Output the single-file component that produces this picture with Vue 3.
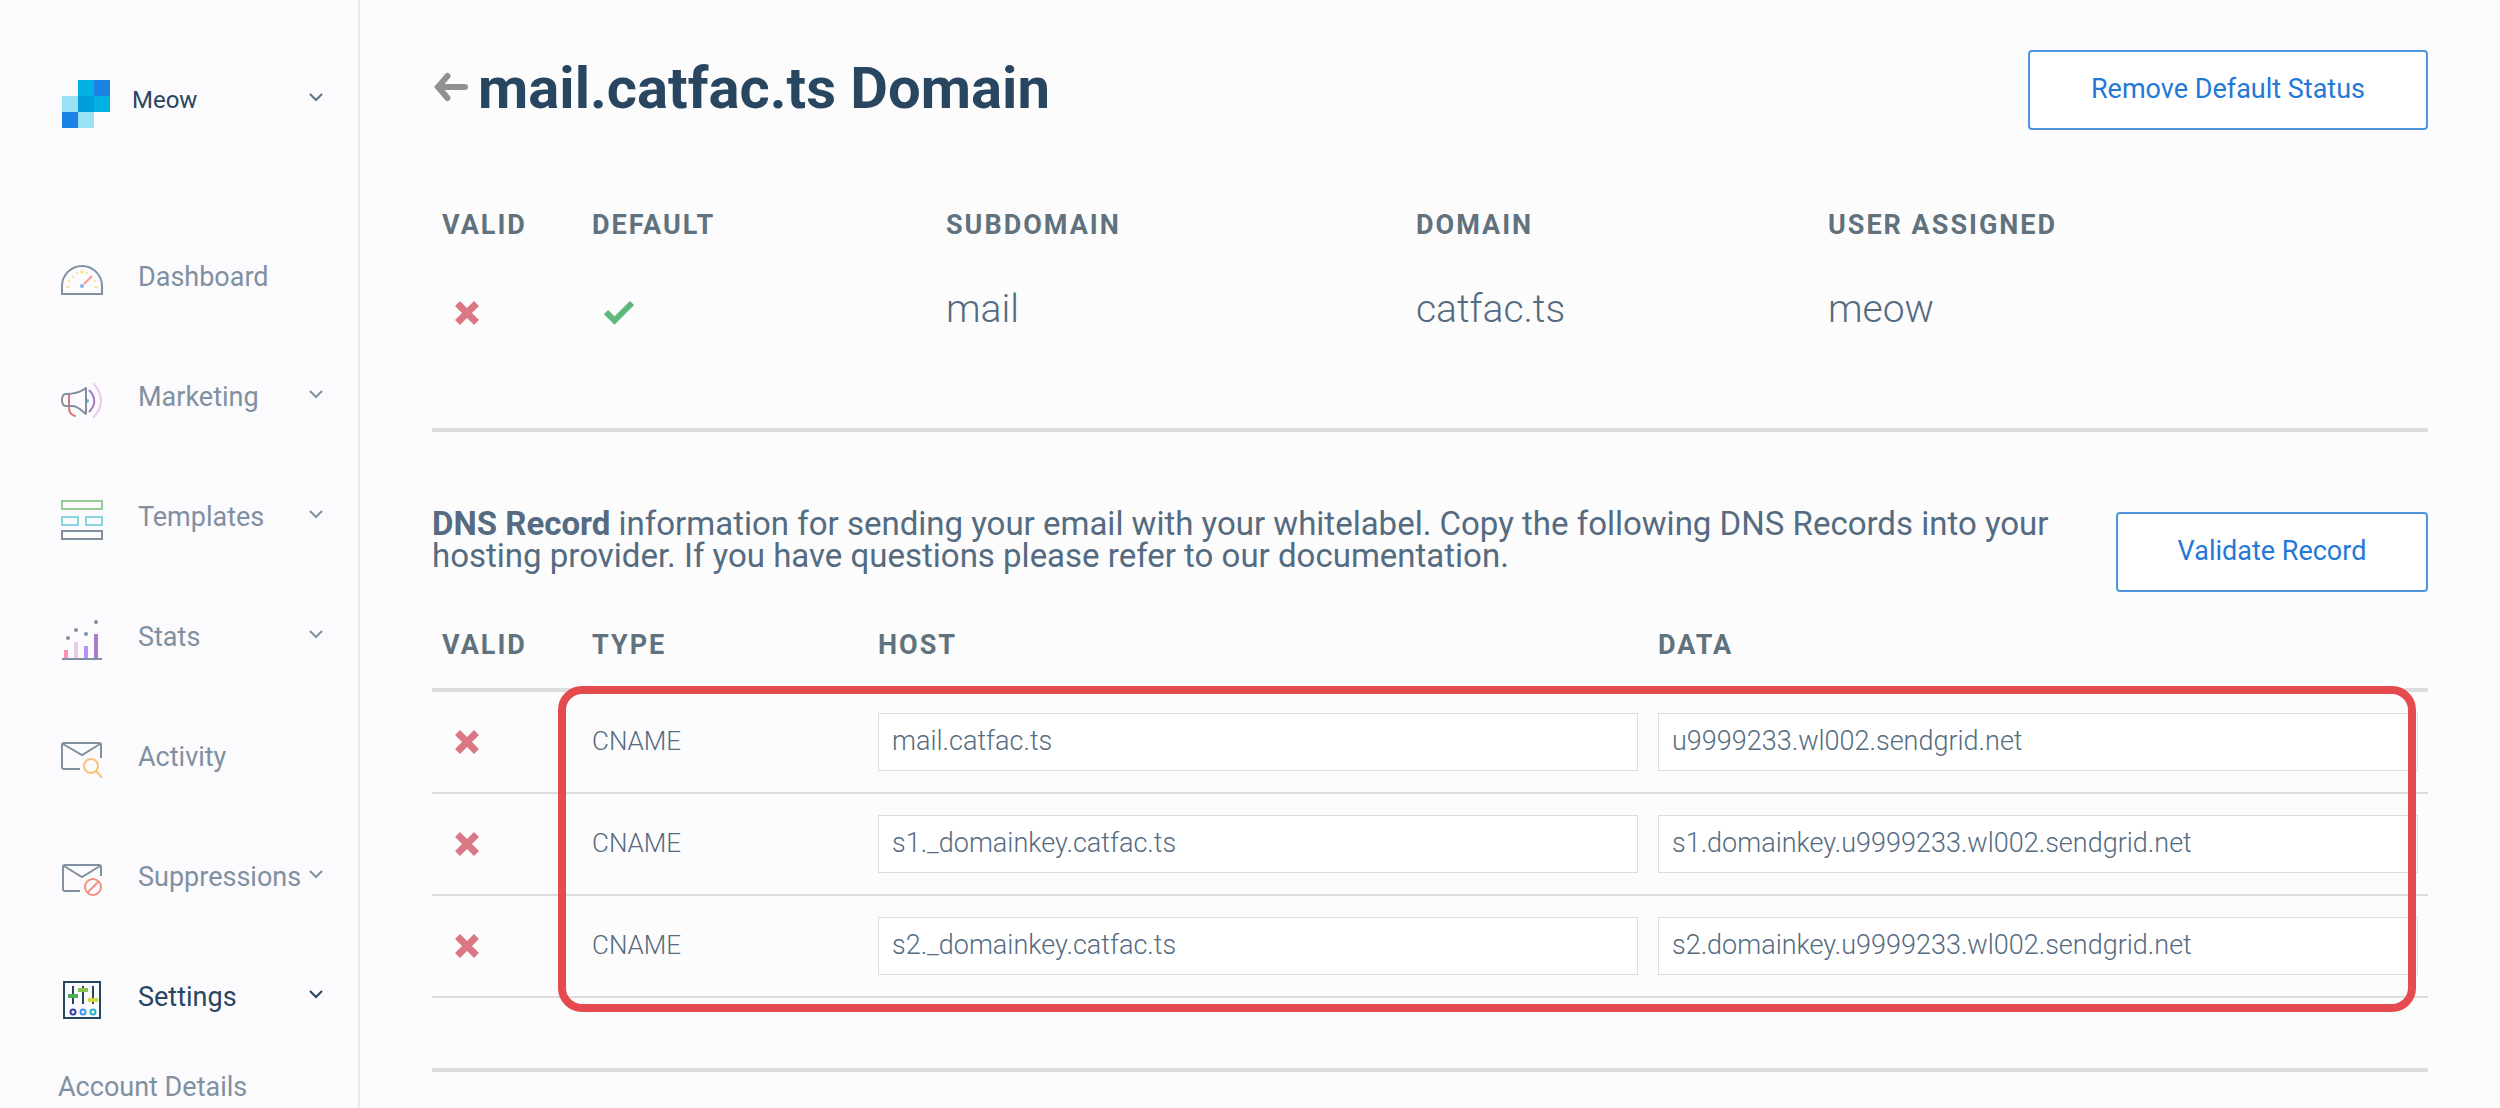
<script setup>
import { ref } from 'vue'

const navItems = [
  { id: 'dashboard', label: 'Dashboard', expandable: false },
  { id: 'marketing', label: 'Marketing', expandable: true },
  { id: 'templates', label: 'Templates', expandable: true },
  { id: 'stats', label: 'Stats', expandable: true },
  { id: 'activity', label: 'Activity', expandable: false },
  { id: 'suppressions', label: 'Suppressions', expandable: true },
  { id: 'settings', label: 'Settings', expandable: true, active: true }
]

const records = ref([
  { type: 'CNAME', host: 'mail.catfac.ts', data: 'u9999233.wl002.sendgrid.net' },
  { type: 'CNAME', host: 's1._domainkey.catfac.ts', data: 's1.domainkey.u9999233.wl002.sendgrid.net' },
  { type: 'CNAME', host: 's2._domainkey.catfac.ts', data: 's2.domainkey.u9999233.wl002.sendgrid.net' }
])
</script>

<template>
  <div class="app">
    <aside class="sidebar">
      <a class="brand" href="#">
        <svg class="logo" viewBox="0 0 48 48" aria-hidden="true" shape-rendering="crispEdges">
          <path fill="#00b2e3" d="M16 0h16v16H16zM32 16h16v16H32z" />
          <path fill="#1a82e2" d="M32 0h16v16H32zM0 32h16v16H0z" />
          <path fill="#99e1f4" d="M0 16h16v16H0zM16 32h16v16H16z" />
          <path fill="#009dd9" d="M16 16h16v16H16z" />
        </svg>
        <span class="brand-name">Meow</span>
        <svg class="chevron" viewBox="0 0 24 24" aria-hidden="true"><path d="M6 6l6 6 6-6" /></svg>
      </a>

      <nav class="nav" aria-label="Main">
        <a v-for="item in navItems" :key="item.id" class="nav-item" :class="{ active: item.active }" href="#">
          <svg class="nav-icon" viewBox="0 0 48 48" aria-hidden="true">
            <template v-if="item.id === 'dashboard'">
              <path d="M4 41V33a20 20 0 0 1 40 0V41z" />
              <g fill="#fbe3a0" stroke="none">
                <rect x="8" y="33" width="4" height="2" rx="1" />
                <rect x="36" y="33" width="4" height="2" rx="1" />
                <circle cx="11" cy="28" r="1.200" />
                <circle cx="15" cy="24" r="1.200" />
                <circle cx="19" cy="20" r="1.200" />
                <circle cx="24" cy="19" r="2" />
                <circle cx="29" cy="20" r="1.200" />
                <circle cx="37" cy="28" r="1.200" />
              </g>
              <path stroke="#f69b89" d="M26 31l8-8" />
              <circle cx="24" cy="33" r="2" fill="#7db1ec" stroke="none" />
            </template>
            <template v-else-if="item.id === 'marketing'">
              <path stroke="#d9776f" stroke-linecap="round" d="M11 21V35Q11 41 17 43" />
              <path stroke-linejoin="round" d="M28 15C23 19 18 21 8 21Q4 21 4 27Q4 33 8 33H14C20 33 24 38 28 41Z" />
              <path fill="#64b5f6" stroke="none" d="M29 26a2 2 0 0 1 0 4z" />
              <path stroke="#a878c4" stroke-linecap="round" d="M31.500 17.500Q41 28 31.500 38.500" />
              <path stroke="#e8cbec" stroke-linecap="round" d="M36 11Q50 27.500 36 44" />
            </template>
            <template v-else-if="item.id === 'templates'">
              <path stroke="#98cc96" d="M4 8h40v8H4z" />
              <path stroke="#8bd5e0" d="M4 24h16v8H4zM28 24h16v8H28z" />
              <path d="M4 38h40v8H4z" />
            </template>
            <template v-else-if="item.id === 'stats'">
              <g stroke="none">
                <path fill="#fa8fb1" d="M6 37h4v8H6z" />
                <path fill="#e8cbec" d="M16 29h4v16h-4z" />
                <path fill="#b094fb" d="M26 33h4v12h-4z" />
                <path fill="#ab7bc8" d="M36 21h4v24h-4z" />
                <g fill="currentColor">
                  <circle cx="10" cy="25" r="2" /><circle cx="18" cy="17" r="2" />
                  <circle cx="28" cy="21" r="2" /><circle cx="38" cy="9" r="2" />
                </g>
              </g>
              <path d="M4 46h40" />
            </template>
            <template v-else-if="item.id === 'activity'">
              <path d="M22 36H6q-2 0-2-2V12q0-2 2-2H41q2 0 2 2V25" />
              <path d="M5 11l19 11 18-11" />
              <circle cx="33" cy="33" r="7" stroke="#fbc078" />
              <path stroke="#fbc078" stroke-linecap="round" d="M38 38l5.500 6" />
            </template>
            <template v-else-if="item.id === 'suppressions'">
              <path d="M22 38H7q-2 0-2-2V14q0-2 2-2H41q2 0 2 2V23" />
              <path d="M6 13l18 11 18-11" />
              <circle cx="35" cy="34" r="8" stroke="#f0917f" />
              <path stroke="#f0917f" d="M29.500 39.500l11-11" />
            </template>
            <template v-else>
              <path d="M6 9h36v36H6zM15 13v18M25 13v18M35 13v18" />
              <g stroke="none">
                <path fill="#4caf50" d="M10 21h10v4H10z" />
                <path fill="#8bc34a" d="M20 15h10v4H20z" />
                <path fill="#cddc39" d="M30 25h10v4H30z" />
              </g>
              <circle cx="15" cy="39" r="2.500" stroke="#3843a5" />
              <circle cx="25" cy="39" r="2.500" stroke="#3f97ee" />
              <circle cx="35" cy="39" r="2.500" stroke="#26b5c8" />
            </template>
          </svg>
          <span>{{ item.label }}</span>
          <svg v-if="item.expandable" class="chevron" viewBox="0 0 24 24" aria-hidden="true"><path d="M6 6l6 6 6-6" /></svg>
        </a>
        <a class="sub-item" href="#">Account Details</a>
      </nav>
    </aside>

    <main class="content">
      <header class="page-header">
        <h1 class="title">
          <a class="back" href="#" aria-label="Back">
            <svg viewBox="0 0 36 32" aria-hidden="true"><path d="M15.500 4L6 15l9.500 11M6 15h27" /></svg>
          </a>
          mail.catfac.ts Domain
        </h1>
        <button class="btn btn-wide" type="button">Remove Default Status</button>
      </header>

      <table class="summary">
        <colgroup>
          <col class="col-valid"><col class="col-default"><col class="col-subdomain"><col class="col-domain"><col>
        </colgroup>
        <thead>
          <tr>
            <th scope="col">Valid</th>
            <th scope="col">Default</th>
            <th scope="col">Subdomain</th>
            <th scope="col">Domain</th>
            <th scope="col">User Assigned</th>
          </tr>
        </thead>
        <tbody>
          <tr>
            <td class="status">
              <svg class="cross" viewBox="0 0 26 26" role="img" aria-label="Not valid"><path d="M3.500 3.500l19 19M22.500 3.500l-19 19" /></svg>
            </td>
            <td class="status">
              <svg class="check" viewBox="0 0 32 26" role="img" aria-label="Default"><path d="M2 12l8.500 8.500L28 3" /></svg>
            </td>
            <td>mail</td>
            <td>catfac.ts</td>
            <td>meow</td>
          </tr>
        </tbody>
      </table>

      <hr class="rule">

      <section class="dns-intro">
        <p><strong>DNS Record</strong> information for sending your email with your whitelabel. Copy the following DNS Records into your hosting provider. If you have questions please refer to our documentation.</p>
        <button class="btn" type="button">Validate Record</button>
      </section>

      <div class="records-wrap">
        <table class="records">
          <colgroup>
            <col class="col-valid"><col class="col-type"><col><col>
          </colgroup>
          <thead>
            <tr>
              <th scope="col">Valid</th>
              <th scope="col">Type</th>
              <th scope="col">Host</th>
              <th scope="col">Data</th>
            </tr>
          </thead>
          <tbody>
            <tr v-for="record in records" :key="record.host">
              <td>
                <svg class="cross" viewBox="0 0 26 26" role="img" aria-label="Not valid"><path d="M3.500 3.500l19 19M22.500 3.500l-19 19" /></svg>
              </td>
              <td class="type">{{ record.type }}</td>
              <td><input v-model="record.host" type="text" readonly aria-label="Host"></td>
              <td><input v-model="record.data" type="text" readonly aria-label="Data"></td>
            </tr>
          </tbody>
        </table>
        <div class="highlight"></div>
      </div>

      <hr class="rule rule-end">
    </main>
  </div>
</template>

<style>
body {
  margin: 0;
  background: #fcfcfc;
}
</style>

<style scoped>
.app {
  display: flex;
  min-height: 100vh;
  font-family: Roboto, "Liberation Sans", sans-serif;
  font-size: 27px;
  color: #546b81;
}

.app * {
  box-sizing: border-box;
}

a {
  color: inherit;
  text-decoration: none;
}

/* Sidebar */
.sidebar {
  flex: 0 0 360px;
  padding: 80px 30px 0 58px;
  border-right: 2px solid #e9eaee;
  background: #fbfbfe;
  color: #8190a0;
}

.brand {
  display: flex;
  align-items: flex-start;
  margin-bottom: 89px;
  padding-left: 4px;
  color: #294661;
}

.logo {
  width: 48px;
  height: 48px;
  margin-right: 22px;
}

.brand-name {
  font-size: 24px;
  line-height: 40px;
}

.chevron {
  flex: none;
  width: 24px;
  height: 24px;
  margin-left: auto;
  fill: none;
  stroke: currentColor;
  stroke-width: 2;
}

.brand .chevron {
  margin-top: 8px;
  stroke: #5f7386;
}

.nav-item {
  display: flex;
  align-items: center;
  height: 120px;
}

.nav-item.active {
  color: #294661;
}

.nav-icon {
  flex: none;
  width: 48px;
  height: 48px;
  margin-right: 32px;
  fill: none;
  stroke: currentColor;
  stroke-width: 2;
}

.sub-item {
  display: block;
  padding-top: 10px;
  line-height: 40px;
}

/* Main column */
.content {
  flex: 1;
  min-width: 0;
  padding: 50px 72px 0;
}

.page-header {
  display: flex;
  align-items: flex-start;
  justify-content: space-between;
  margin-bottom: 70px;
}

.title {
  display: flex;
  align-items: center;
  gap: 10px;
  margin: 0;
  font-size: 58px;
  line-height: 76px;
  font-weight: 700;
  color: #294661;
}

.back {
  display: flex;
}

.back svg {
  width: 36px;
  height: 32px;
  fill: none;
  stroke: #919191;
  stroke-width: 6;
  stroke-linecap: round;
}

.btn {
  flex: none;
  width: 312px;
  height: 80px;
  padding: 0 0 2px;
  border: 2px solid #4d96dd;
  border-radius: 4px;
  background: #fff;
  color: #2478d6;
  font: inherit;
}

.btn-wide {
  width: 400px;
}

table {
  width: 100%;
  table-layout: fixed;
  border-spacing: 0;
}

.col-valid {
  width: 150px;
}

.col-default {
  width: 354px;
}

.col-subdomain {
  width: 470px;
}

.col-domain {
  width: 412px;
}

.col-type {
  width: 286px;
}

th,
td {
  padding: 0 10px;
  text-align: left;
}

th {
  color: #60727e;
  font-weight: 700;
  letter-spacing: 2px;
  text-transform: uppercase;
}

td {
  font-weight: 300;
}

.summary th {
  height: 50px;
}

.summary td {
  height: 118px;
  font-size: 39px;
}

.summary .status {
  padding-top: 8px;
}

.cross,
.check {
  display: block;
  height: 26px;
  margin-left: 12px;
  fill: none;
  stroke-width: 7;
}

.cross {
  width: 26px;
  stroke: #d97784;
}

.check {
  width: 32px;
  stroke: #5fb87b;
  stroke-width: 6;
}

.rule {
  height: 4px;
  margin: 60px 0 76px;
  border: 0;
  background: #ddd;
}

.dns-intro {
  display: flex;
  align-items: flex-end;
  justify-content: space-between;
  gap: 60px;
  min-height: 84px;
}

.dns-intro p {
  align-self: flex-start;
  margin: 0;
  font-size: 33px;
  line-height: 32px;
}

.records-wrap {
  position: relative;
  margin-top: 10px;
}

.records th {
  height: 90px;
  border-bottom: 4px solid #ddd;
}

.records td {
  height: 102px;
  border-bottom: 2px solid #ddd;
}

.records .type {
  padding-bottom: 2px;
  font-size: 26px;
}

.records input {
  display: block;
  width: 100%;
  height: 58px;
  padding: 0 13px 2px;
  border: 1px solid #ddd;
  border-radius: 0;
  background: #fff;
  color: inherit;
  font: inherit;
}

/* Callout frame laid over the record rows */
.highlight {
  position: absolute;
  top: 84px;
  right: 12px;
  bottom: -14px;
  left: 126px;
  border: 8px solid #e54b4e;
  border-radius: 24px;
  pointer-events: none;
}

.rule-end {
  margin: 70px 0 0;
}
</style>
